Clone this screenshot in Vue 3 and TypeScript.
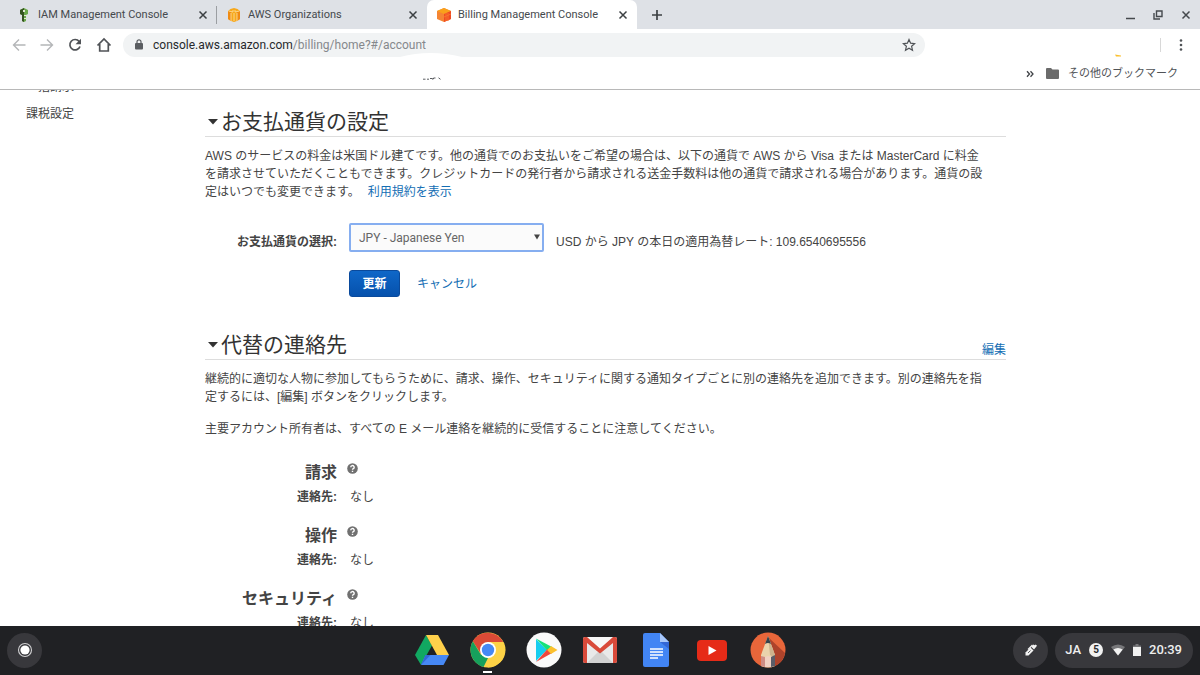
<script setup lang="ts">
import { ref } from 'vue'

interface Tab {
  title: string
  icon: 'iam' | 'org' | 'billing'
}

const tabs: Tab[] = [
  { title: 'IAM Management Console', icon: 'iam' },
  { title: 'AWS Organizations', icon: 'org' },
  { title: 'Billing Management Console', icon: 'billing' },
]
const activeTab = ref(2)
const currency = ref('JPY')
const contacts = ['請求', '操作', 'セキュリティ']
</script>

<template>
  <div class="screen">
    <header class="browser">
      <div class="tabstrip">
        <div v-for="(tab, i) in tabs" :key="tab.title" class="tab" :class="{ active: i === activeTab }">
          <svg v-if="tab.icon === 'iam'" class="favicon" viewBox="0 0 16 16" aria-hidden="true">
            <path d="M4 3l4-2 4 2v4l-2 1v6l-2 1-2-1V8L4 7z" fill="#6aa84a" />
            <path d="M4 3l4-2v14l-2-1V8L4 7z" fill="#35531f" />
            <path d="M7 3h2v2H7zM8 8h3v1H8zM8 11h3v1H8z" fill="#dfe8d4" />
          </svg>
          <svg v-else-if="tab.icon === 'org'" class="favicon" viewBox="0 0 16 16" aria-hidden="true">
            <path d="M2 4l2.500-2L8 1l3.500 1L14 4v8l-3 2-3 1-3-1-3-2z" fill="#f7a81b" />
            <path d="M2 4l3 1v9l-3-2zM14 4l-3 1v9l3-2z" fill="#f08b13" />
            <path d="M2.500 4L7 5V3M13.500 4L9 5V3M5 6v8M11 6v8M8 6v8" fill="none" stroke="#fbe1a8" stroke-width=".8" />
          </svg>
          <svg v-else class="favicon" viewBox="0 0 16 16" aria-hidden="true">
            <path d="M8 1l7 3v8l-7 3-7-3V4z" fill="#f58534" />
            <path d="M8 1l7 3-7 3-7-3z" fill="#f9a11b" />
            <path d="M8 7l7-3v8l-7 3z" fill="#ef4a23" />
            <path d="M10 6v8M12 6v8M8 10l7-3" stroke="#f9742d" fill="none" />
          </svg>
          <button class="tab-title" type="button" @click="activeTab = i">{{ tab.title }}</button>
          <button class="icon-button" type="button" aria-label="閉じる">
            <svg width="10" height="10" viewBox="0 0 10 10"><path d="M1.5 1.5l7 7m0-7l-7 7" stroke="#3c4043" stroke-width="1.5" /></svg>
          </button>
        </div>
        <button class="icon-button new-tab" type="button" aria-label="新しいタブ">
          <svg width="12" height="12" viewBox="0 0 12 12"><path d="M6 1v10M1 6h10" stroke="#3c4043" stroke-width="1.7" /></svg>
        </button>
        <div class="window-controls">
          <button class="icon-button" type="button" aria-label="最小化">
            <svg width="10" height="10" viewBox="0 0 10 10"><path d="M1 8.500h9" stroke="#45494d" stroke-width="1.500" /></svg>
          </button>
          <button class="icon-button" type="button" aria-label="元に戻す">
            <svg width="10" height="10" viewBox="0 0 10 10"><path d="M3.500 1h5.500v5.500H3.500zM1 3v6h6" fill="none" stroke="#45494d" stroke-width="1.400" /></svg>
          </button>
          <button class="icon-button" type="button" aria-label="ウィンドウを閉じる">
            <svg width="10" height="10" viewBox="0 0 10 10"><path d="M1.500 1.500l7 7m0-7l-7 7" stroke="#45494d" stroke-width="1.500" /></svg>
          </button>
        </div>
      </div>

      <div class="toolbar">
        <div class="nav-buttons">
          <button class="icon-button" type="button" aria-label="戻る">
            <svg width="14" height="14" viewBox="0 0 14 14"><path d="M13.500 7H2M7 1.500L1.500 7 7 12.500" fill="none" stroke="#b4b6b8" stroke-width="1.400" /></svg>
          </button>
          <button class="icon-button" type="button" aria-label="進む">
            <svg width="14" height="14" viewBox="0 0 14 14"><path d="M.5 7H12M7 1.500L12.500 7 7 12.500" fill="none" stroke="#b4b6b8" stroke-width="1.400" /></svg>
          </button>
          <button class="icon-button" type="button" aria-label="再読み込み">
            <svg width="14" height="14" viewBox="0 0 14 14"><path d="M11.200 3.500A5.200 5.200 0 1 0 12 8.500" fill="none" stroke="#505357" stroke-width="1.700" /><path d="M13 .8v5.500H7.500z" fill="#505357" /></svg>
          </button>
          <button class="icon-button" type="button" aria-label="ホーム">
            <svg width="16" height="16" viewBox="0 0 16 16"><path d="M1.500 8.500L8 2l6.500 6.500M3.700 7v7h8.600V7" fill="none" stroke="#505357" stroke-width="1.700" /></svg>
          </button>
        </div>
        <div class="omnibox">
          <svg width="8" height="11" viewBox="0 0 8 11" aria-hidden="true"><path d="M2 5V2.800a2 2 0 0 1 4 0V5" fill="none" stroke="#5a5d61" stroke-width="1.200" /><rect y="4" width="8" height="6.500" rx="1" fill="#5a5d61" /></svg>
          <span class="url"><b>console.aws.amazon.com</b>/billing/home?#/account</span>
          <button class="icon-button" type="button" aria-label="ブックマークに追加">
            <svg width="14" height="14" viewBox="0 0 14 14"><path d="M7 1.600l1.600 3.600 4 .4-3 2.700.9 3.900L7 10.200l-3.500 2 .9-3.900-3-2.700 4-.4z" fill="none" stroke="#505357" stroke-width="1.200" /></svg>
          </button>
          <svg class="omnibox-edge" width="62" height="4" viewBox="0 0 62 4" aria-hidden="true"><path d="M0 4Q30-4 62 4z" fill="#fff" /></svg>
        </div>
        <svg class="avatar" width="6" height="3" viewBox="0 0 6 3" aria-hidden="true"><path d="M0 .5l6 1v1H1z" fill="#fbc02d" /></svg>
        <span class="toolbar-divider"></span>
        <button class="icon-button" type="button" aria-label="メニュー">
          <svg width="4" height="14" viewBox="0 0 4 14"><g fill="#505357"><circle cx="2" cy="2.500" r="1.300" /><circle cx="2" cy="7" r="1.300" /><circle cx="2" cy="11.500" r="1.300" /></g></svg>
        </button>
      </div>

      <div class="bookmarks">
        <svg class="bookmark-trace" width="20" height="3" viewBox="0 0 20 3" aria-hidden="true"><path d="M0 2.200h2.500M4 2.200h2M7 1.500h2.500v1M10.500 2.200V1h2M15.500.8l2 1.500" stroke="#5a5d61" fill="none" /></svg>
        <button class="icon-button" type="button" aria-label="その他を表示">
          <svg width="8" height="8" viewBox="0 0 8 8"><path d="M1 1.200L3.500 4 1 6.800M4.500 1.200L7 4 4.500 6.800" fill="none" stroke="#404347" stroke-width="1.300" /></svg>
        </button>
        <button class="bookmark-folder" type="button">
          <svg width="13" height="11" viewBox="0 0 13 11" aria-hidden="true"><path d="M1 0h4l1.500 1.500H12a1 1 0 0 1 1 1V10a1 1 0 0 1-1 1H1a1 1 0 0 1-1-1V1a1 1 0 0 1 1-1z" fill="#6b6b6b" /></svg>
          その他のブックマーク
        </button>
      </div>
    </header>

    <div class="page">
      <nav class="sidebar">
        <a href="#">一括請求</a>
        <a href="#">課税設定</a>
      </nav>
      <main class="content">
        <section>
          <div class="section-head">
            <h2><svg class="caret" viewBox="0 0 10 6" aria-hidden="true"><path d="M0 0h10L5 5.500z" fill="#333" /></svg>お支払通貨の設定</h2>
          </div>
          <p>AWS のサービスの料金は米国ドル建てです。他の通貨でのお支払いをご希望の場合は、以下の通貨で AWS から Visa または MasterCard に料金<br>を請求させていただくこともできます。クレジットカードの発行者から請求される送金手数料は他の通貨で請求される場合があります。通貨の設<br>定はいつでも変更できます。<a class="terms" href="#">利用規約を表示</a></p>
          <form class="currency" @submit.prevent>
            <label for="currency">お支払通貨の選択:</label>
            <div class="select-box">
              <select id="currency" v-model="currency">
                <option value="JPY">JPY - Japanese Yen</option>
                <option value="USD">USD - US Dollar</option>
              </select>
              <svg class="select-arrow" viewBox="0 0 6 6" aria-hidden="true"><path d="M0 .5h6L3 5.500z" fill="#444" /></svg>
            </div>
            <span class="rate">USD から JPY の本日の適用為替レート: 109.6540695556</span>
            <div class="actions">
              <button class="primary" type="submit">更新</button>
              <a href="#">キャンセル</a>
            </div>
          </form>
        </section>

        <section>
          <div class="section-head">
            <h2><svg class="caret" viewBox="0 0 10 6" aria-hidden="true"><path d="M0 0h10L5 5.500z" fill="#333" /></svg>代替の連絡先</h2>
            <a href="#">編集</a>
          </div>
          <p>継続的に適切な人物に参加してもらうために、請求、操作、セキュリティに関する通知タイプごとに別の連絡先を追加できます。別の連絡先を指<br>定するには、[編集] ボタンをクリックします。</p>
          <p class="note">主要アカウント所有者は、すべての E メール連絡を継続的に受信することに注意してください。</p>
          <div v-for="name in contacts" :key="name" class="contact">
            <h3>{{ name }}</h3>
            <button class="icon-button help" type="button" aria-label="ヘルプ">
              <svg width="11" height="11" viewBox="0 0 11 11"><circle cx="5.500" cy="5.500" r="5.300" fill="#707070" /><path d="M3.800 4.300a1.700 1.600 0 1 1 2.500 1.300q-.8.400-.8 1.100M5.500 7.700v1.300" fill="none" stroke="#fff" stroke-width="1.400" /></svg>
            </button>
            <strong>連絡先:</strong>
            <span>なし</span>
          </div>
        </section>
      </main>
    </div>

    <footer class="shelf">
      <button class="round" type="button" aria-label="ランチャー">
        <svg width="16" height="16" viewBox="0 0 16 16"><circle cx="8" cy="8" r="6.500" fill="none" stroke="#d0d0d2" stroke-width="1.100" /><circle cx="8" cy="8" r="4.600" fill="#fff" /></svg>
      </button>
      <div class="apps">
        <button class="app" type="button" aria-label="ドライブ">
          <svg viewBox="0 0 36 36"><path d="M12 3l6 10.500L7 33 1 23z" fill="#11a861" /><path d="M12 3h12l11 20H23z" fill="#ffd04b" /><path d="M11.500 23H35l-5.500 10H7z" fill="#4688f4" /><path d="M11.500 23h5L7 33z" fill="#3367d6" /></svg>
        </button>
        <button class="app open" type="button" aria-label="Chrome">
          <svg viewBox="0 0 36 36"><circle cx="18" cy="18" r="17.500" fill="#fdd246" /><path d="M2.800 9.300A17.500 17.500 0 0 1 33.200 10H18l-7 12z" fill="#db4a36" /><path d="M2.800 9.300l8 13.200L18 26l-4.500 9A17.500 17.500 0 0 1 2.800 9.300z" fill="#16a05c" /><path d="M18 10h15.200a17.500 17.500 0 0 1-15.500 25.500L25 22z" fill="#fdd246" /><circle cx="18" cy="18" r="8" fill="#fff" /><circle cx="18" cy="18" r="6.200" fill="#4688f4" /></svg>
        </button>
        <button class="app" type="button" aria-label="Play ストア">
          <svg viewBox="0 0 36 36"><circle cx="18" cy="18" r="17.500" fill="#fafafa" /><path d="M10 7v22l11-11z" fill="#16cdef" /><path d="M10 6.500L26 15l-4.500 4z" fill="#16e27a" /><path d="M10 30l16-9-4.500-4z" fill="#f0463c" /><path d="M25 14l6.500 4-6.500 4-3.800-4z" fill="#fbc02d" /></svg>
        </button>
        <button class="app" type="button" aria-label="Gmail">
          <svg viewBox="0 0 36 36"><rect x="1" y="5" width="34" height="26" rx="2" fill="#e9e9e9" /><path d="M5 31l13-13 13 13z" fill="#d2d2d2" /><path d="M4 5h28L18 17z" fill="#f7f7f7" /><path d="M1 7a2 2 0 0 1 2-2h2l13 11.500L31 5h2a2 2 0 0 1 2 2v22a2 2 0 0 1-2 2h-2V11L18 21.500 5 11v20H3a2 2 0 0 1-2-2z" fill="#d94a3a" /></svg>
        </button>
        <button class="app" type="button" aria-label="ドキュメント">
          <svg viewBox="0 0 36 36"><path d="M7 1h15l9 9v23a2 2 0 0 1-2 2H7a2 2 0 0 1-2-2V3a2 2 0 0 1 2-2z" fill="#4285f4" /><path d="M22 1l9 9h-9z" fill="#a8c7fa" /><path d="M22 10h9v7z" fill="#3367d6" /><path d="M12 17h13M12 20h13M12 23h13M12 26h8" stroke="#fff" stroke-width="1.500" /></svg>
        </button>
        <button class="app" type="button" aria-label="YouTube">
          <svg viewBox="0 0 36 36"><rect x="3" y="8" width="30" height="21" rx="4" fill="#e62b18" /><path d="M14.500 14l8 4.500-8 4.500z" fill="#fff" /></svg>
        </button>
        <button class="app" type="button" aria-label="スケッチ">
          <svg viewBox="0 0 36 36"><circle cx="18" cy="18" r="17.500" fill="#e8663a" /><path d="M18 5l17 16a17.500 17.500 0 0 1-10 13z" fill="#ad432b" /><path d="M18 4l7 19v11q-7 3-14 0V23z" fill="#ead3ac" /><path d="M18 4l7 19-2 2-3-2z" fill="#cdb48d" /><path d="M18 4l3 8q-3-2-6 0z" fill="#35434c" /><path d="M11 24l4 1v10l-4-1z" fill="#cf8d84" /><path d="M15 25l3-1 3 1v10h-6z" fill="#f1d1c2" /><path d="M21 25l4-2v11l-4 1z" fill="#5a5d68" /></svg>
        </button>
      </div>
      <div class="tray">
        <button class="round" type="button" aria-label="タッチペン">
          <svg width="14" height="14" viewBox="0 0 14 14"><path d="M1.500 12.500v-3L6.500 4.500l3 3-5 5z" fill="#f1f1f1" /><path d="M7.200 3.800L9.500 1.500l1.200.8 1-.8 1.300 1.300-3 3.700z" fill="#f1f1f1" /><path d="M4 6.500L8.500 2" stroke="#f1f1f1" stroke-width="1.200" fill="none" /><path d="M4 10l2.500-2.500" stroke="#38383c" stroke-width=".8" /></svg>
        </button>
        <button class="status" type="button">
          <span>JA</span>
          <span class="badge">5</span>
          <svg width="14" height="12" viewBox="0 0 14 12" aria-hidden="true"><path d="M0 3q7-5 14 0l-7 8.500z" fill="#77777a" /><path d="M2.300 5.500q4.700-3 9.400 0L7 11.500z" fill="#f1f1f1" /></svg>
          <svg width="8" height="12" viewBox="0 0 8 12" aria-hidden="true"><path d="M2.500 0h3v1.500H8V4H0V1.500h2.500z" fill="#77777a" /><path d="M0 3h8v9H0z" fill="#f1f1f1" /></svg>
          <span>20:39</span>
        </button>
      </div>
    </footer>
  </div>
</template>

<style>
body {
  margin: 0;
}
</style>

<style scoped>
.screen {
  display: flex;
  flex-direction: column;
  height: 100vh;
  overflow: hidden;
  background: #fff;
  color: #444;
  font-family: "Liberation Sans", "Noto Sans CJK JP", sans-serif;
  font-size: 12px;
  line-height: 18px;
}
button,
select {
  margin: 0;
  padding: 0;
  border: 0;
  background: none;
  color: inherit;
  font: inherit;
}
svg {
  display: block;
  flex: none;
}
a {
  color: #146eb4;
  text-decoration: none;
}
.icon-button {
  display: flex;
  flex: none;
  align-items: center;
  justify-content: center;
}

.browser {
  flex: none;
  border-bottom: 1px solid #b8b8b8;
  font-family: Roboto, "Noto Sans CJK JP", sans-serif;
}
.tabstrip {
  display: flex;
  align-items: stretch;
  height: 29px;
  background: #dee1e6;
}
.tab {
  display: flex;
  align-items: center;
  box-sizing: border-box;
  width: 210px;
  padding: 0 9px;
  gap: 6px;
  color: #45494d;
  font-size: 11px;
}
.tab:first-child {
  width: 217px;
  padding-left: 16px;
  background: linear-gradient(#9b9ea2, #9b9ea2) right center / 1px 18px no-repeat;
}
.tab.active {
  border-radius: 7px 7px 0 0;
  background: #fff;
}
.favicon {
  width: 16px;
  height: 16px;
}
.tab-title {
  flex: 1;
  overflow: hidden;
  text-align: left;
  white-space: nowrap;
}
.new-tab {
  margin-left: 14px;
}
.window-controls {
  display: flex;
  gap: 18px;
  margin-left: auto;
  padding-right: 9px;
}
.toolbar {
  display: flex;
  align-items: center;
  height: 31px;
  padding-right: 17px;
}
.nav-buttons {
  display: flex;
  align-items: center;
  gap: 14px;
  padding: 0 11px 0 12px;
}
.omnibox {
  position: relative;
  display: flex;
  flex: 1;
  align-items: center;
  height: 24px;
  padding: 0 9px 0 12px;
  gap: 10px;
  border-radius: 12px;
  background: #f1f3f4;
}
.url {
  flex: 1;
  color: #85888c;
}
.url b {
  color: #27292c;
  font-weight: 400;
}
.omnibox-edge {
  position: absolute;
  bottom: 0;
  left: 277px;
}
.avatar {
  align-self: flex-end;
  margin: 0 39px 3px 190px;
}
.toolbar-divider {
  width: 1px;
  height: 14px;
  margin-right: 18px;
  background: #d8d8d8;
}
.bookmarks {
  display: flex;
  align-items: center;
  justify-content: flex-end;
  box-sizing: border-box;
  height: 29px;
  padding: 0 20px 2px 0;
}
.bookmark-trace {
  align-self: flex-end;
  margin: 0 auto 7px 423px;
}
.bookmark-folder {
  display: flex;
  align-items: center;
  gap: 9px;
  margin-left: 12px;
  padding-right: 2px;
  color: #505357;
  font-size: 11px;
}

.page {
  display: flex;
  flex: 1;
  min-height: 0;
  overflow: hidden;
}
.sidebar {
  display: flex;
  flex: none;
  flex-direction: column;
  gap: 9px;
  box-sizing: border-box;
  width: 205px;
  margin-top: -12px;
  padding-left: 26px;
}
.sidebar a {
  color: #444;
}
.content {
  flex: 1;
  margin-right: 194px;
}
.section-head {
  display: flex;
  align-items: flex-end;
  justify-content: space-between;
  box-sizing: border-box;
  height: 47px;
  border-bottom: 1px solid #ddd;
}
h2,
h3,
p {
  margin: 0;
}
h2 {
  display: flex;
  align-items: center;
  gap: 3px;
  padding-left: 3px;
  color: #333;
  font-size: 21px;
  font-weight: 400;
  line-height: 28px;
}
.caret {
  width: 10px;
  height: 6px;
}
p {
  margin-top: 10px;
}
.terms {
  margin-left: 8px;
}
.currency {
  display: grid;
  grid-template-columns: 132px 195px 1fr;
  gap: 18px 12px;
  align-items: center;
  margin: 22px 0 16px;
}
.currency label {
  padding-top: 8px;
  font-weight: 700;
  text-align: right;
}
.select-box {
  position: relative;
  display: flex;
}
select {
  flex: 1;
  box-sizing: border-box;
  height: 29px;
  padding: 0 8px;
  border: 2px solid #86aef0;
  border-radius: 2px;
  outline: none;
  background: #fbfbfb;
  color: #666;
  font-family: Roboto, "Noto Sans CJK JP", sans-serif;
  appearance: none;
}
.select-arrow {
  position: absolute;
  top: 11px;
  right: 4px;
  width: 6px;
  height: 6px;
  pointer-events: none;
}
.rate {
  padding-top: 8px;
}
.actions {
  display: flex;
  grid-column: 2 / -1;
  align-items: center;
  gap: 17px;
}
.primary {
  width: 51px;
  height: 27px;
  border: 1px solid #0a4a9c;
  border-radius: 3px;
  background: linear-gradient(#0f67c8, #0651ac);
  color: #fff;
  font-weight: 700;
}
.note {
  margin: 14px 0 22px;
}
.contact {
  display: grid;
  grid-template-columns: 132px 1fr;
  column-gap: 13px;
  margin-bottom: 13px;
  line-height: 25px;
}
.contact h3,
.contact strong {
  text-align: right;
}
.contact h3 {
  font-size: 16px;
}
.help {
  align-self: start;
  justify-self: start;
  margin: 3px 0 0 -3px;
}

.shelf {
  display: grid;
  flex: none;
  grid-template-columns: 1fr auto 1fr;
  align-items: center;
  box-sizing: border-box;
  height: 49px;
  padding: 0 7px 1px;
  background: #202124;
}
.round {
  display: flex;
  align-items: center;
  justify-content: center;
  width: 35px;
  height: 35px;
  border-radius: 50%;
  background: #38383c;
}
.apps {
  display: flex;
  gap: 20px;
}
.app {
  position: relative;
  width: 36px;
  height: 36px;
}
.app.open::after {
  position: absolute;
  bottom: -5px;
  left: 13px;
  width: 9px;
  height: 2px;
  background: #fff;
  content: "";
}
.tray {
  display: flex;
  gap: 7px;
  justify-content: flex-end;
}
.status {
  display: flex;
  align-items: center;
  height: 35px;
  padding: 0 11px 0 10px;
  gap: 8px;
  border-radius: 18px;
  background: #38383c;
  color: #eee;
  font-family: Roboto, sans-serif;
  font-size: 13px;
  font-weight: 500;
}
.badge {
  width: 14px;
  height: 14px;
  border-radius: 50%;
  background: #f1f1f1;
  color: #29292c;
  font-size: 10px;
  font-weight: 700;
  line-height: 14px;
}
</style>
